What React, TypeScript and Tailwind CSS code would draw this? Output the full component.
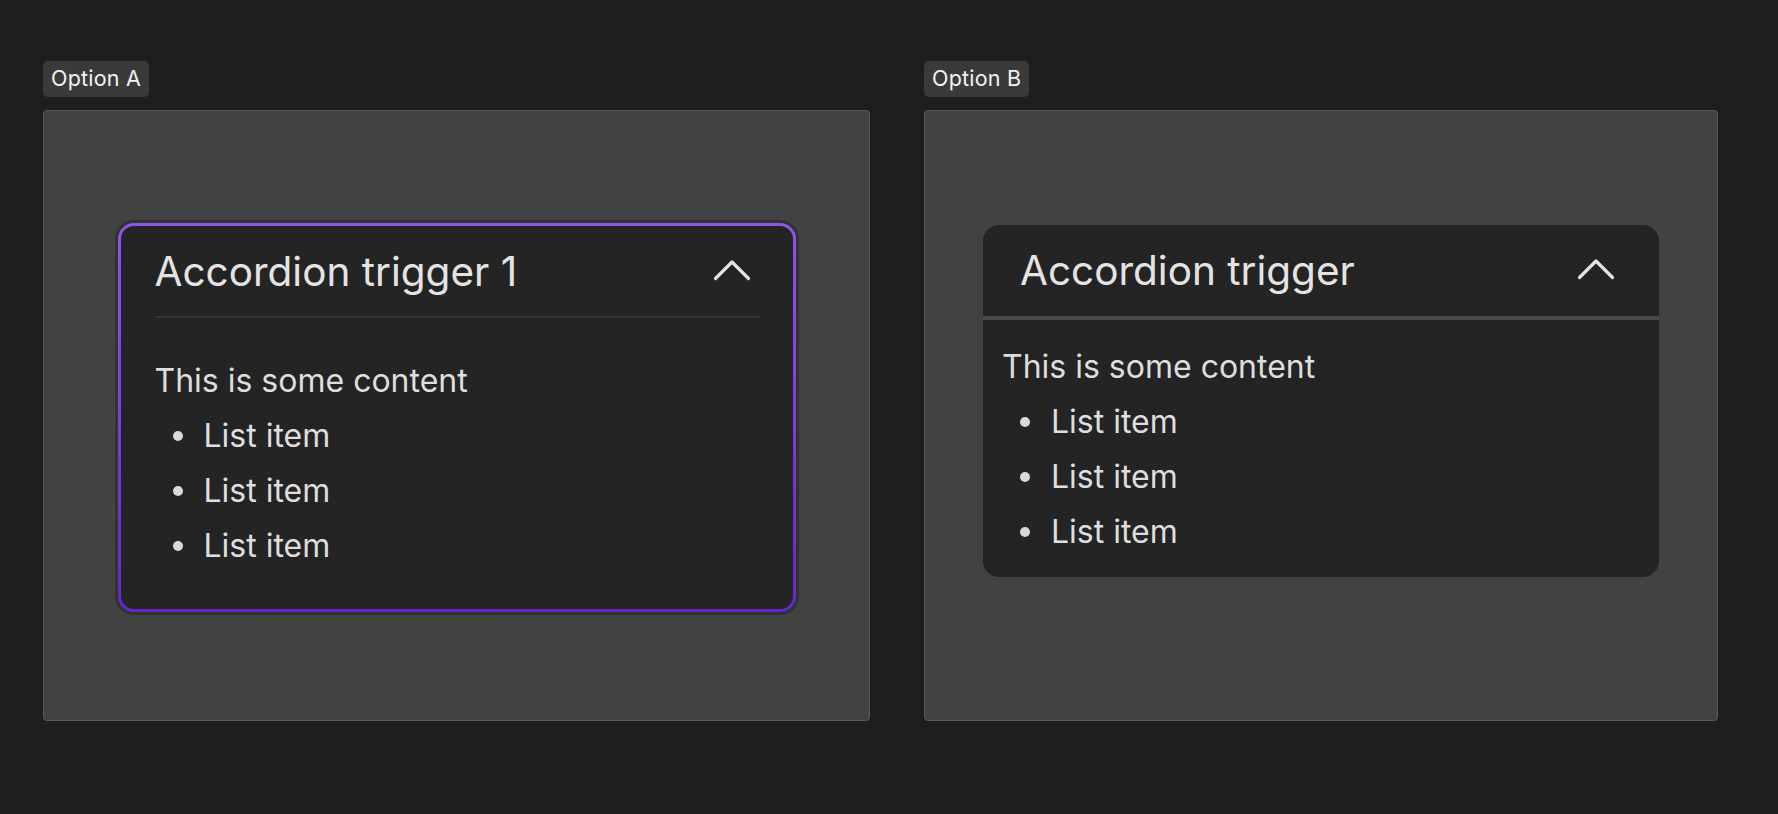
import React from "react";

/* ================= PIECES ================= */

function Chevron() {
  return (
    <svg width="38" height="22" viewBox="0 0 38 22" fill="none" className="shrink-0">
      <polyline
        points="2.5,19.5 19,3 35.5,19.5"
        stroke="#e4e4e4"
        strokeWidth="3.2"
        strokeLinecap="round"
        strokeLinejoin="round"
      />
    </svg>
  );
}

function Label({ text }: { text: string }) {
  return (
    <div className="self-start h-[36px] px-[8px] flex items-center rounded-[5px] bg-[#3a3a3a] text-[21.5px] tracking-[0.01em] text-[#f2f2f2] leading-none">
      {text}
    </div>
  );
}

function Items() {
  return (
    <>
      <p>This is some content</p>
      <ul className="pl-[18px]">
        {[1, 2, 3].map((i) => (
          <li key={i} className="flex items-center gap-[21px]">
            <span className="w-[10px] h-[10px] rounded-full bg-[#dadada] shrink-0" />
            <span>List item</span>
          </li>
        ))}
      </ul>
    </>
  );
}

/* ================= OPTION A ================= */

function CardA() {
  return (
    <div className="w-[678px] rounded-[16px] p-[3px] bg-gradient-to-b from-[#8d55e8] to-[#6326cc] shadow-[0_0_0_3px_rgba(20,20,20,0.35)]">
      <div className="rounded-[13px] bg-[#242424] px-[34px]">
        <div className="flex items-center justify-between pt-[16px] pb-[14px] border-b-2 border-[#343434]">
          <span className="text-[40.5px] leading-[60px] text-[#e4e4e4]">
            Accordion trigger 1
          </span>
          <div className="mr-[8px] -mt-[4px]">
            <Chevron />
          </div>
        </div>
        <div className="pt-[35px] pb-[36px] text-[32px] leading-[55px] text-[#dedede]">
          <Items />
        </div>
      </div>
    </div>
  );
}

/* ================= OPTION B ================= */

function CardB() {
  return (
    <div className="w-[676px] rounded-[16px] bg-[#242424] overflow-hidden">
      <div className="flex items-center justify-between pl-[37px] pr-[44px] pt-[16px] pb-[15px] border-b-4 border-[#4a4a4a]">
        <span className="text-[40.5px] leading-[60px] text-[#e4e4e4]">
          Accordion trigger
        </span>
        <div className="-mt-[4px]">
          <Chevron />
        </div>
      </div>
      <div className="px-[19px] pt-[19px] pb-[18px] text-[32px] leading-[55px] text-[#dedede]">
        <Items />
      </div>
    </div>
  );
}

/* ================= PAGE ================= */

export default function App() {
  return (
    <div
      className="h-screen w-full bg-[#1e1e1e] pt-[61px] pl-[43px] flex gap-[54px]"
      style={{ fontFamily: "Inter, 'Noto Sans', sans-serif" }}
    >
      <div className="flex flex-col gap-[13px]">
        <Label text="Option A" />
        <div className="w-[827px] h-[611px] rounded-[4px] bg-[#424242] border border-[#585858] flex justify-center pt-[112px]">
          <div className="h-fit">
            <CardA />
          </div>
        </div>
      </div>

      <div className="flex flex-col gap-[13px]">
        <Label text="Option B" />
        <div className="w-[794px] h-[611px] rounded-[4px] bg-[#424242] border border-[#585858] flex justify-center pt-[114px]">
          <div className="h-fit">
            <CardB />
          </div>
        </div>
      </div>
    </div>
  );
}
